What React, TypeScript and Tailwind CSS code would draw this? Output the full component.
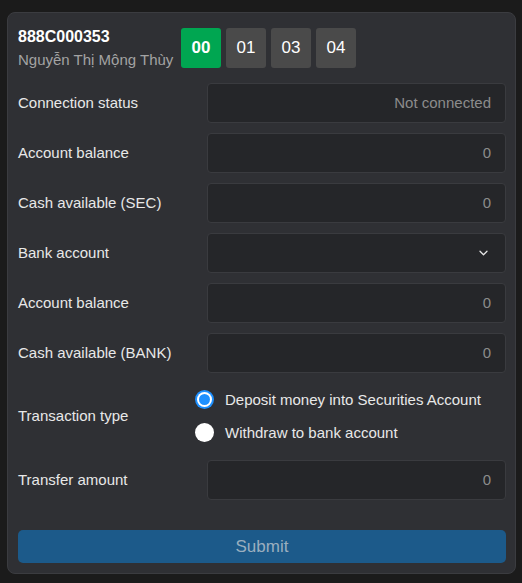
import { useState } from 'react';

const tabs = ['00', '01', '03', '04'];

function ValueBox({ value }: { value: string }) {
  return (
    <div className="flex h-10 flex-1 items-center justify-end rounded border border-[#3a3b3f] bg-[#252629] px-[14px] text-[15px] text-[#8c8c8c]">
      {value}
    </div>
  );
}

function Row({ label, children }: { label: string; children: React.ReactNode }) {
  return (
    <div className="flex min-h-10 items-center">
      <div className="w-[189px] shrink-0 text-[15px] text-[#e8e8e8]">{label}</div>
      {children}
    </div>
  );
}

export default function App() {
  const [tab, setTab] = useState('00');
  const [type, setType] = useState('deposit');

  return (
    <div className="min-h-[583px] bg-[#1b1b1b] px-[7px] pt-3 font-[Liberation_Sans,Arial,sans-serif]">
      <div className="w-[509px] rounded-lg border border-[#3b3c40] bg-[#2f3034] pl-[10px] pr-[9px] pb-[10px] pt-[15px]">
        <div className="flex h-10 items-start">
          <div className="mr-2 w-[155px]">
            <div className="text-[16px] font-bold leading-[18px] text-white">888C000353</div>
            <div className="mt-[5px] whitespace-nowrap text-[15px] leading-[17px] text-[#a3a3a3]">Nguyễn Thị Mộng Thùy</div>
          </div>
          <div className="flex gap-[5px]">
            {tabs.map((t) => (
              <button
                key={t}
                onClick={() => setTab(t)}
                className={
                  tab === t
                    ? 'flex h-10 w-10 items-center justify-center rounded-[3px] bg-[#00a651] text-[17px] font-bold text-white'
                    : 'flex h-10 w-10 items-center justify-center rounded-[3px] bg-[#4a4a4a] text-[17px] text-white'
                }
              >
                {t}
              </button>
            ))}
          </div>
        </div>

        <div className="mt-[15px] flex flex-col gap-[10px]">
          <Row label="Connection status">
            <ValueBox value="Not connected" />
          </Row>
          <Row label="Account balance">
            <ValueBox value="0" />
          </Row>
          <Row label="Cash available (SEC)">
            <ValueBox value="0" />
          </Row>
          <Row label="Bank account">
            <div className="flex h-10 flex-1 items-center justify-end rounded border border-[#3a3b3f] bg-[#252629] pr-[17px]">
              <svg width="9" height="6" viewBox="0 0 9 6" fill="none">
                <path d="M1 1.2l3.5 3.5L8 1.2" stroke="#e6e6e6" strokeWidth="1.3" strokeLinecap="round" strokeLinejoin="round" />
              </svg>
            </div>
          </Row>
          <Row label="Account balance">
            <ValueBox value="0" />
          </Row>
          <Row label="Cash available (BANK)">
            <ValueBox value="0" />
          </Row>
          <div className="flex h-[67px] items-center">
            <div className="w-[177px] shrink-0 text-[15px] text-[#e8e8e8]">Transaction type</div>
            <div className="mb-[2px] flex flex-col gap-[14px]">
              {[
                { id: 'deposit', text: 'Deposit money into Securities Account' },
                { id: 'withdraw', text: 'Withdraw to bank account' },
              ].map((o) => (
                <label key={o.id} className="flex cursor-pointer items-center gap-[11px]" onClick={() => setType(o.id)}>
                  {type === o.id ? (
                    <span className="flex h-[19px] w-[19px] items-center justify-center rounded-full bg-[#1e90ff]">
                      <span className="flex h-[15px] w-[15px] items-center justify-center rounded-full bg-white">
                        <span className="h-[11px] w-[11px] rounded-full bg-[#1e90ff]" />
                      </span>
                    </span>
                  ) : (
                    <span className="h-[19px] w-[19px] rounded-full bg-white" />
                  )}
                  <span className="text-[15px] leading-[19px] text-[#e8e8e8]">{o.text}</span>
                </label>
              ))}
            </div>
          </div>
          <Row label="Transfer amount">
            <ValueBox value="0" />
          </Row>
        </div>

        <button className="mt-[30px] flex h-[33px] w-full items-center justify-center rounded-[5px] bg-[#1c5a8a] text-[17px] text-[#9aaebf]">
          Submit
        </button>
      </div>
    </div>
  );
}
